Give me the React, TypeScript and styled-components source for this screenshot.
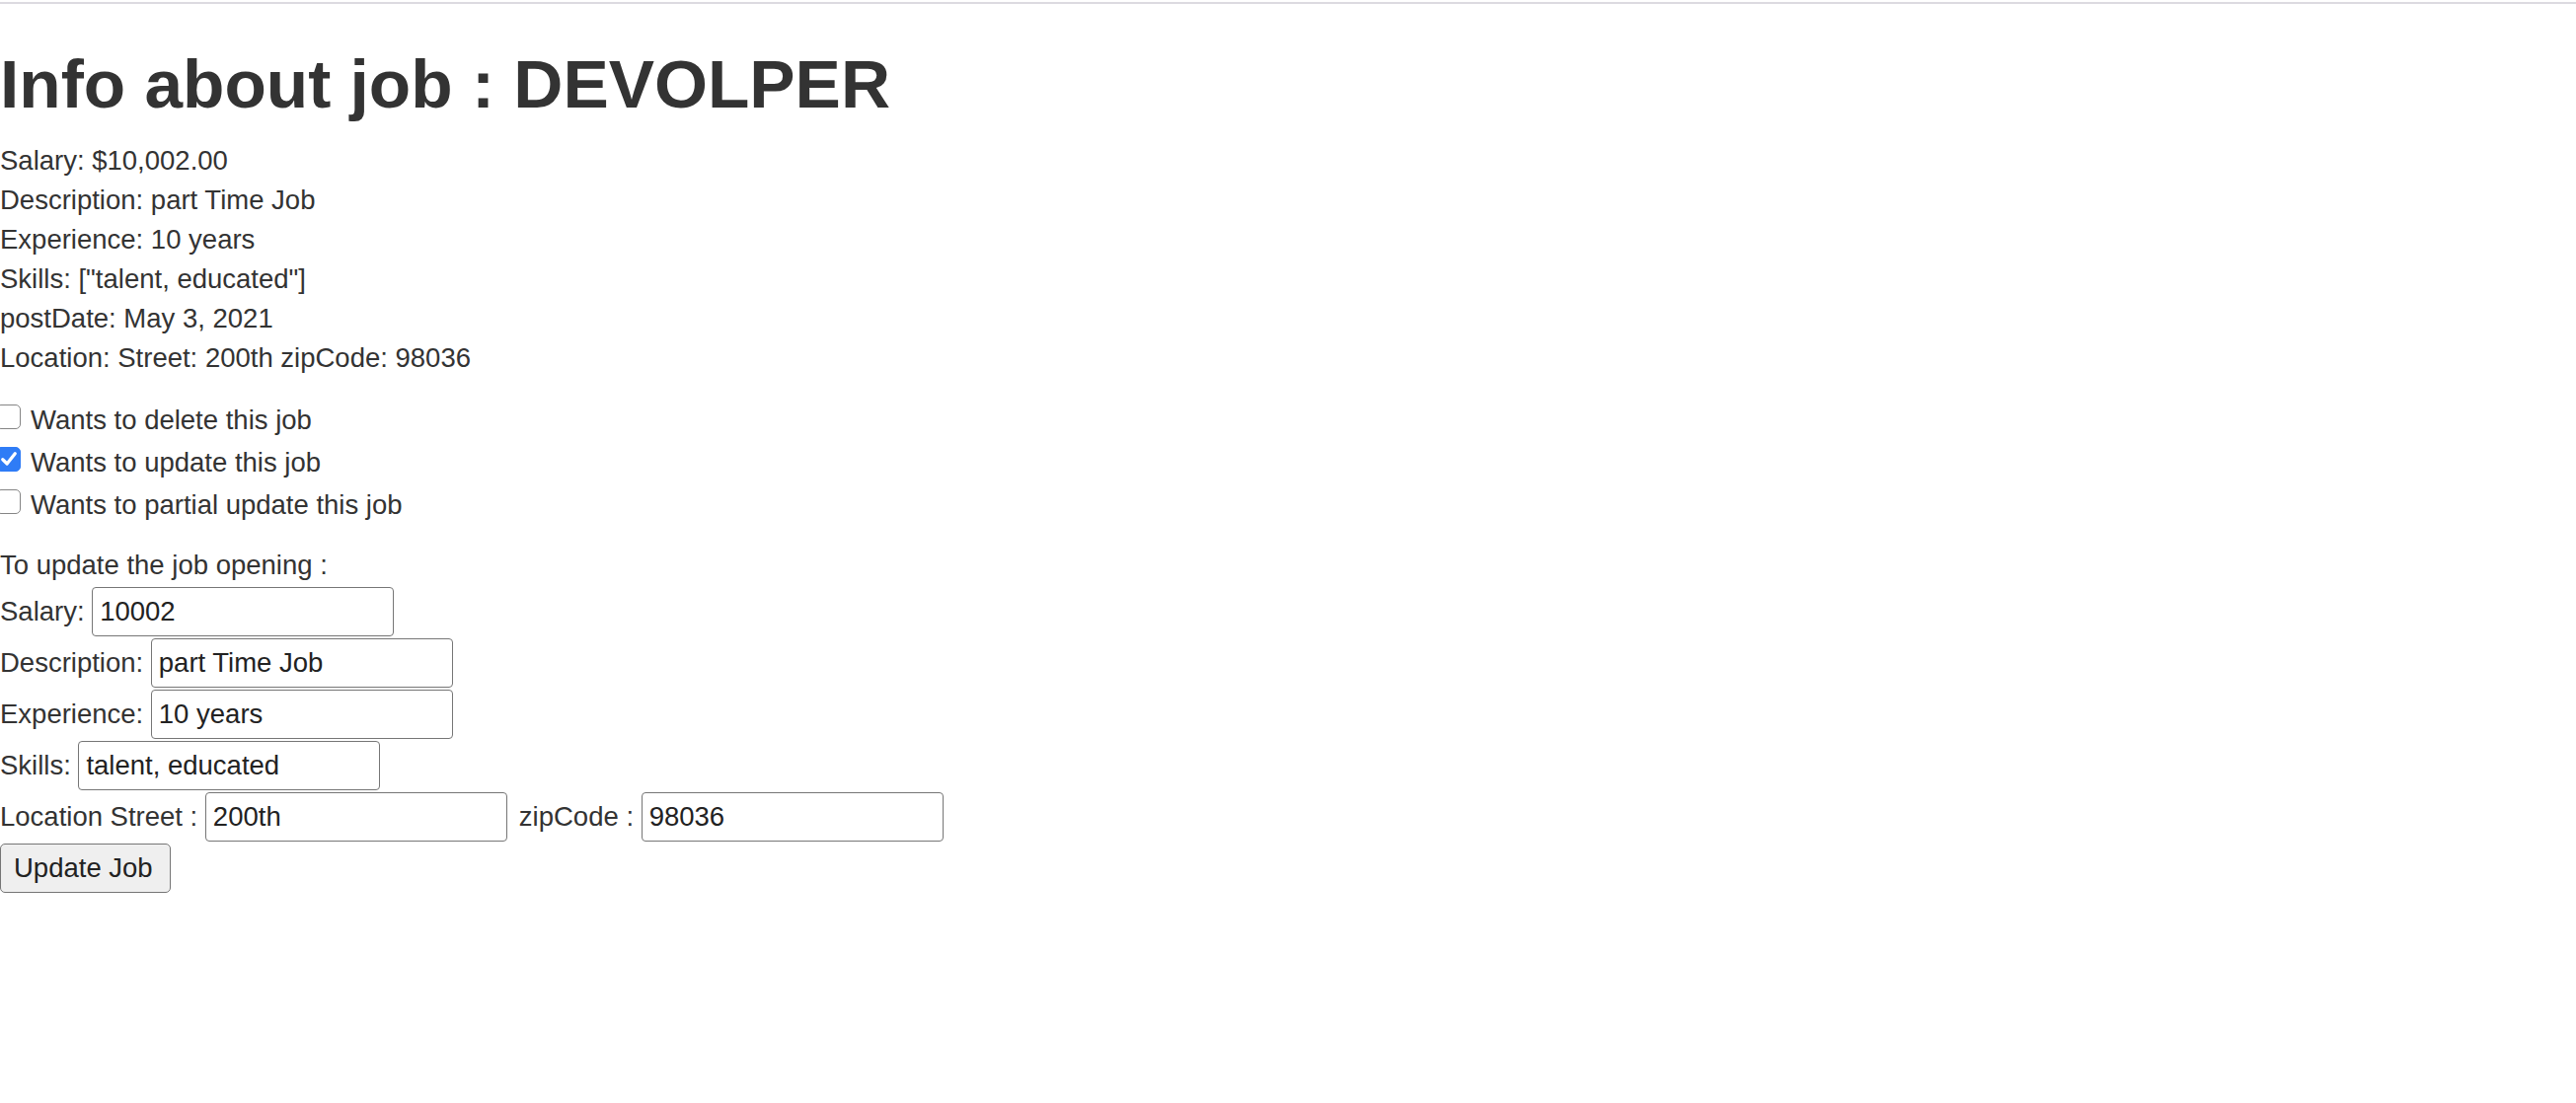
import React from "react";
import styled, { createGlobalStyle } from "styled-components";

const GlobalStyle = createGlobalStyle`
  html, body {
    margin: 0;
    padding: 0;
    background: #ffffff;
  }
  body {
    font-family: "Liberation Sans", Arial, Helvetica, sans-serif;
    font-size: 27.5px;
    line-height: 40px;
    color: #333333;
  }
  * { box-sizing: border-box; }
`;

const Page = styled.main`
  display: flex;
  flex-direction: column;
  align-items: flex-start;
`;

const TopRule = styled.div`
  align-self: stretch;
  height: 2px;
  margin-top: 2px;
  background: #dcdae0;
`;

const Title = styled.h1`
  margin: 40px 0 16px;
  font-size: 69.4px;
  font-weight: 700;
  line-height: 83px;
  color: #333333;
`;

const InfoList = styled.section`
  display: flex;
  flex-direction: column;
`;

const InfoLine = styled.div`
  line-height: 40px;
  white-space: nowrap;
`;

const Checks = styled.div`
  display: flex;
  flex-direction: column;
  margin-top: 21px;
`;

const CheckRow = styled.label`
  display: flex;
  align-items: flex-start;
  gap: 10px;
  height: 43.3px;
  line-height: 40px;
  padding-top: 1.65px;
  cursor: pointer;
`;

const Box = styled.span<{ $checked?: boolean }>`
  flex: none;
  width: 25px;
  height: 25px;
  margin-left: -4px;
  margin-top: 4px;
  border-radius: 5px;
  display: flex;
  align-items: center;
  justify-content: center;
  background: ${(p) => (p.$checked ? "#2f7cf6" : "#ffffff")};
  border: ${(p) => (p.$checked ? "1.5px solid #2f7cf6" : "1.6px solid #858585")};
`;

const Intro = styled.div`
  margin-top: 19.5px;
  line-height: 40px;
`;

const Form = styled.form`
  display: flex;
  flex-direction: column;
  align-items: flex-start;
  margin-top: 1.5px;
`;

const Row = styled.div`
  display: flex;
  align-items: center;
  height: 50px;
  margin-bottom: 2px;
  white-space: nowrap;
`;

const Label = styled.span<{ $lead?: boolean }>`
  line-height: 40px;
  margin-left: ${(p) => (p.$lead ? "12px" : "0")};
`;

const Field = styled.input`
  width: 306px;
  height: 50px;
  margin: 0 0 0 7.6px;
  padding: 0 7px;
  border: 1.6px solid #767676;
  border-radius: 4px;
  background: #ffffff;
  font-family: "Liberation Sans", Arial, Helvetica, sans-serif;
  font-size: 27.5px;
  color: #222222;
  outline: none;
`;

const Button = styled.button`
  height: 50px;
  margin: 0;
  padding: 0 17px 0 13px;
  border: 1.6px solid #767676;
  border-radius: 5px;
  background: #efefef;
  font-family: "Liberation Sans", Arial, Helvetica, sans-serif;
  font-size: 27.5px;
  color: #222222;
  cursor: pointer;
`;

const Check = () => (
  <svg width="20" height="20" viewBox="0 0 16 16" fill="none">
    <path
      d="M3 8.6 L6.5 12 L13 3.8"
      stroke="#ffffff"
      strokeWidth="2.6"
      strokeLinecap="round"
      strokeLinejoin="round"
    />
  </svg>
);

const info = [
  "Salary: $10,002.00",
  "Description: part Time Job",
  "Experience: 10 years",
  'Skills: ["talent, educated"]',
  "postDate: May 3, 2021",
  "Location: Street: 200th zipCode: 98036",
];

const options = [
  { label: "Wants to delete this job", checked: false },
  { label: "Wants to update this job", checked: true },
  { label: "Wants to partial update this job", checked: false },
];

export default function App() {
  return (
    <>
      <GlobalStyle />
      <Page>
        <TopRule />
        <Title>Info about job : DEVOLPER</Title>
        <InfoList>
          {info.map((t) => (
            <InfoLine key={t}>{t}</InfoLine>
          ))}
        </InfoList>
        <Checks>
          {options.map((o) => (
            <CheckRow key={o.label}>
              <Box $checked={o.checked}>{o.checked && <Check />}</Box>
              <span>{o.label}</span>
            </CheckRow>
          ))}
        </Checks>
        <Intro>To update the job opening :</Intro>
        <Form onSubmit={(e) => e.preventDefault()}>
          <Row>
            <Label>Salary:</Label>
            <Field defaultValue="10002" />
          </Row>
          <Row>
            <Label>Description:</Label>
            <Field defaultValue="part Time Job" />
          </Row>
          <Row>
            <Label>Experience:</Label>
            <Field defaultValue="10 years" />
          </Row>
          <Row>
            <Label>Skills:</Label>
            <Field defaultValue="talent, educated" />
          </Row>
          <Row>
            <Label>Location Street :</Label>
            <Field defaultValue="200th" />
            <Label $lead>zipCode :</Label>
            <Field defaultValue="98036" />
          </Row>
          <Button type="submit">Update Job</Button>
        </Form>
      </Page>
    </>
  );
}
